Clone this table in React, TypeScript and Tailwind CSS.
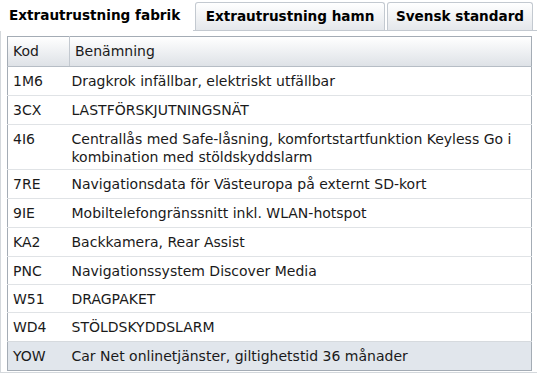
import React from 'react';

type Row = { code: string; name: string; pad?: string };

const rows: Row[] = [
  { code: '1M6', name: 'Dragkrok infällbar, elektriskt utfällbar' },
  { code: '3CX', name: 'LASTFÖRSKJUTNINGSNÄT' },
  {
    code: '4I6',
    name: 'Centrallås med Safe-låsning, komfortstartfunktion Keyless Go i kombination med stöldskyddslarm',
    pad: 'pb-[3px]',
  },
  { code: '7RE', name: 'Navigationsdata för Västeuropa på externt SD-kort' },
  { code: '9IE', name: 'Mobiltelefongränssnitt inkl. WLAN-hotspot' },
  { code: 'KA2', name: 'Backkamera, Rear Assist' },
  { code: 'PNC', name: 'Navigationssystem Discover Media', pad: 'pb-[4px]' },
  { code: 'W51', name: 'DRAGPAKET', pad: 'pb-[4px]' },
  { code: 'WD4', name: 'STÖLDSKYDDSLARM' },
  { code: 'YOW', name: 'Car Net onlinetjänster, giltighetstid 36 månader' },
];

const tabs = ['Extrautrustning fabrik', 'Extrautrustning hamn', 'Svensk standard'];

export default function App() {
  return (
    <div
      className="w-[537px] h-[374px] bg-white text-[14px] text-[#1a1a1a] overflow-hidden"
      style={{ fontFamily: '"DejaVu Sans", Verdana, sans-serif' }}
    >
      {/* tab strip */}
      <div className="flex items-end h-[31px] border-b border-[#c3c9d0]">
        <div className="h-[31px] w-[193px] -mb-px bg-white flex items-center pl-[9px] pb-[1px] font-bold text-[13.6px] text-black whitespace-nowrap">
          {tabs[0]}
        </div>
        <div className="h-[28px] w-[190px] ml-[2px] rounded-t-[3px] border border-b-0 border-[#c3c9d0] bg-gradient-to-b from-white to-[#e4e7eb] flex items-center justify-center font-bold text-[13.6px] text-black whitespace-nowrap">
          {tabs[1]}
        </div>
        <div className="h-[28px] w-[146px] ml-[2px] rounded-t-[3px] border border-b-0 border-[#c3c9d0] bg-gradient-to-b from-white to-[#e4e7eb] flex items-center justify-center font-bold text-[13.6px] text-black whitespace-nowrap">
          {tabs[2]}
        </div>
      </div>

      {/* panel */}
      <div className="h-[343px] -mt-px border-l border-b border-[#d4d8dc] pt-[6px] pl-[6px] pr-[6px]">
        <table className="w-[525px] border-collapse border border-[#a4acb5] table-fixed">
          <colgroup>
            <col className="w-[62px]" />
            <col />
          </colgroup>
          <thead>
            <tr className="bg-gradient-to-b from-white to-[#dde1e6] h-[30px]">
              <th className="text-left font-normal pl-[5px] border-r border-[#c3c9d0] border-b border-b-[#b6bdc5]">Kod</th>
              <th className="text-left font-normal pl-[5px] border-b border-[#b6bdc5]">Benämning</th>
            </tr>
          </thead>
          <tbody>
            {rows.map((r, i) => {
              const pad = r.pad ?? 'pb-[5px]';
              return (
                <tr
                  key={r.code}
                  className={
                    i === rows.length - 1
                      ? 'bg-[#e1e6ec] border-t border-[#d6dade]'
                      : 'border-t border-[#e0e3e6]'
                  }
                >
                  <td className={`align-top pl-[5px] pt-[5px] leading-[18px] ${pad}`}>{r.code}</td>
                  <td className={`align-top pl-[2px] pr-[4px] pt-[5px] leading-[18px] ${pad}`}>{r.name}</td>
                </tr>
              );
            })}
          </tbody>
        </table>
      </div>
    </div>
  );
}
